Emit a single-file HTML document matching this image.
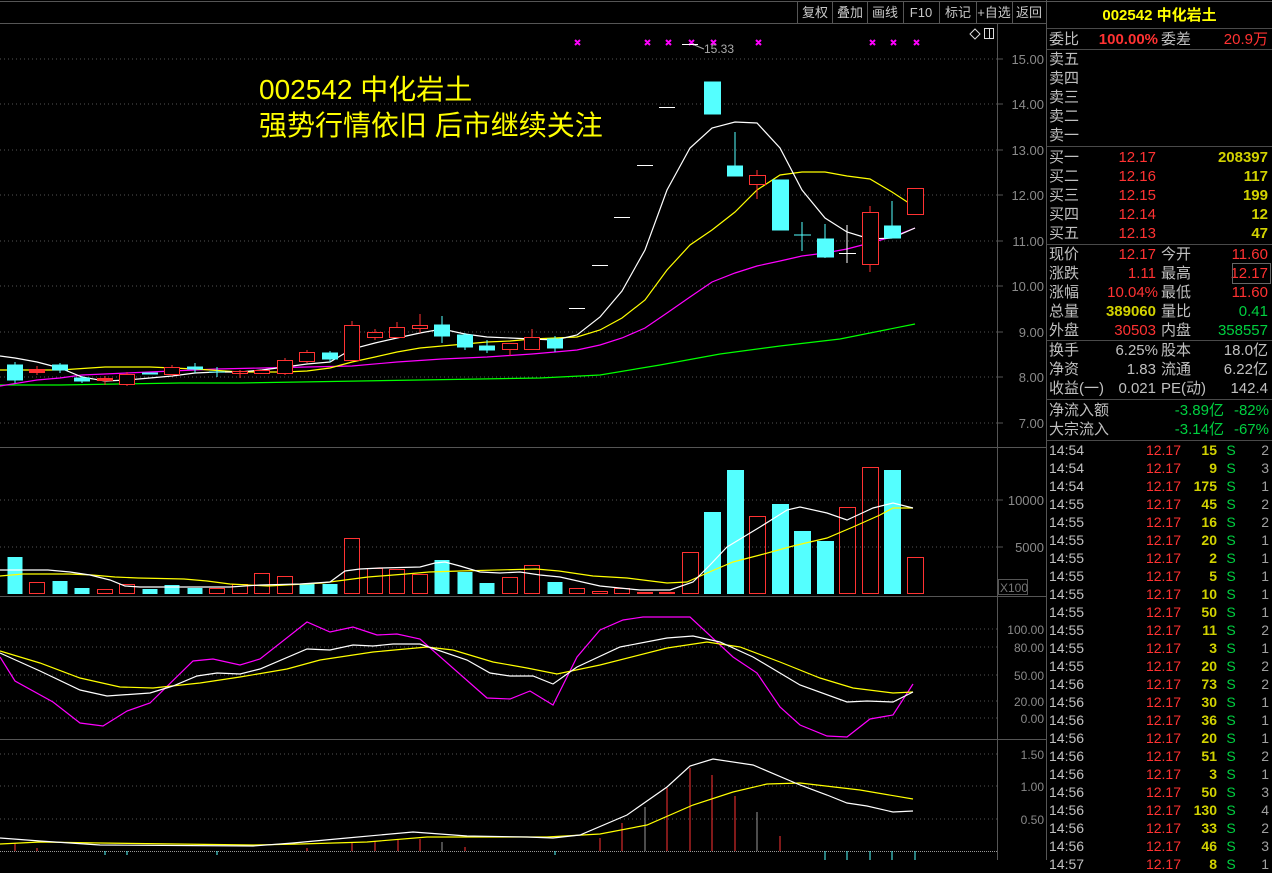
<!DOCTYPE html>
<html><head><meta charset="utf-8"><style>
body{margin:0;background:#000;width:1272px;height:860px;overflow:hidden;position:relative;font-family:"Liberation Sans","Noto Sans CJK SC",sans-serif;}
.t{position:absolute;font-size:15px;line-height:19px;white-space:nowrap;color:#c0c0c0}
.r{color:#ff3232}.y{color:#d2d200}.g{color:#00d040}.yy{color:#ffff00}
.ra{text-align:right}
.sep{position:absolute;left:1047px;width:225px;height:1px;background:#4a4a4a}
</style></head><body>
<svg width="1272" height="860" style="position:absolute;left:0;top:0" font-family="Liberation Sans, Noto Sans CJK SC, sans-serif">
<line x1="0" y1="1.5" x2="1272" y2="1.5" stroke="#555"/>
<line x1="0" y1="23.5" x2="1046" y2="23.5" stroke="#555"/>
<line x1="997.5" y1="24" x2="997.5" y2="860" stroke="#555"/>
<line x1="1046.5" y1="0" x2="1046.5" y2="860" stroke="#555"/>
<line x1="0" y1="447.5" x2="1046" y2="447.5" stroke="#555"/>
<line x1="0" y1="596.5" x2="1046" y2="596.5" stroke="#555"/>
<line x1="0" y1="739.5" x2="1046" y2="739.5" stroke="#555"/>
<g stroke="#555"><line x1="797.5" y1="2" x2="797.5" y2="23"/><line x1="832.5" y1="2" x2="832.5" y2="23"/><line x1="867.5" y1="2" x2="867.5" y2="23"/><line x1="903.5" y1="2" x2="903.5" y2="23"/><line x1="939.5" y1="2" x2="939.5" y2="23"/><line x1="976.5" y1="2" x2="976.5" y2="23"/><line x1="1012.5" y1="2" x2="1012.5" y2="23"/></g>
<g fill="#c8c8c8" font-size="13" text-anchor="middle"><text x="815" y="17">复权</text><text x="850" y="17">叠加</text><text x="885" y="17">画线</text><text x="921" y="17">F10</text><text x="958" y="17">标记</text><text x="994" y="17">+自选</text><text x="1029" y="17">返回</text></g>
<g stroke="#555" stroke-dasharray="1,3">
<line x1="0" y1="59" x2="997" y2="59"/><line x1="0" y1="104" x2="997" y2="104"/><line x1="0" y1="150" x2="997" y2="150"/><line x1="0" y1="195" x2="997" y2="195"/><line x1="0" y1="241" x2="997" y2="241"/><line x1="0" y1="286" x2="997" y2="286"/><line x1="0" y1="332" x2="997" y2="332"/><line x1="0" y1="377" x2="997" y2="377"/><line x1="0" y1="423" x2="997" y2="423"/>
<line x1="0" y1="500" x2="997" y2="500"/><line x1="0" y1="547" x2="997" y2="547"/>
<line x1="0" y1="629" x2="997" y2="629"/><line x1="0" y1="647" x2="997" y2="647"/><line x1="0" y1="675" x2="997" y2="675"/><line x1="0" y1="701" x2="997" y2="701"/><line x1="0" y1="718" x2="997" y2="718"/>
<line x1="0" y1="754" x2="997" y2="754"/><line x1="0" y1="786" x2="997" y2="786"/><line x1="0" y1="819" x2="997" y2="819"/>
</g>
<line x1="0" y1="851.5" x2="997" y2="851.5" stroke="#999" stroke-dasharray="1,1"/>
<g fill="#8a8a8a" font-size="13" text-anchor="end">
<text x="1044" y="64">15.00</text><text x="1044" y="109">14.00</text><text x="1044" y="155">13.00</text><text x="1044" y="200">12.00</text><text x="1044" y="246">11.00</text><text x="1044" y="291">10.00</text><text x="1044" y="337">9.00</text><text x="1044" y="382">8.00</text><text x="1044" y="428">7.00</text>
<text x="1044" y="505">10000</text><text x="1044" y="552">5000</text>
<text x="1044" y="634" font-size="12">100.00</text><text x="1044" y="652" font-size="12">80.00</text><text x="1044" y="680" font-size="12">50.00</text><text x="1044" y="706" font-size="12">20.00</text><text x="1044" y="723" font-size="12">0.00</text>
<text x="1044" y="759" font-size="12">1.50</text><text x="1044" y="791" font-size="12">1.00</text><text x="1044" y="824" font-size="12">0.50</text>
</g>
<g stroke="#555"><line x1="997" y1="59" x2="1003" y2="59"/><line x1="997" y1="104" x2="1003" y2="104"/><line x1="997" y1="150" x2="1003" y2="150"/><line x1="997" y1="195" x2="1003" y2="195"/><line x1="997" y1="241" x2="1003" y2="241"/><line x1="997" y1="286" x2="1003" y2="286"/><line x1="997" y1="332" x2="1003" y2="332"/><line x1="997" y1="377" x2="1003" y2="377"/><line x1="997" y1="423" x2="1003" y2="423"/><line x1="997" y1="500" x2="1003" y2="500"/><line x1="997" y1="547" x2="1003" y2="547"/></g>
<rect x="998.5" y="579.5" width="29" height="15" fill="none" stroke="#555"/><text x="1000" y="592" fill="#777" font-size="12">X100</text>
<path d="M975 29 L980 34 L975 39 L970 34 Z" fill="none" stroke="#ddd"/>
<rect x="984.5" y="28.5" width="9" height="10" fill="none" stroke="#ddd"/><line x1="989.5" y1="28" x2="989.5" y2="39" stroke="#ddd"/>
<text x="259" y="99" fill="#ffff00" font-size="28">002542 中化岩土</text>
<text x="259" y="135" fill="#ffff00" font-size="28">强势行情依旧 后市继续关注</text>
<g stroke="#ff00ff" stroke-width="2">
<path d="M575 40l5 5M580 40l-5 5M645 40l5 5M650 40l-5 5M666 40l5 5M671 40l-5 5M689 40l5 5M694 40l-5 5M711 40l5 5M716 40l-5 5M756 40l5 5M761 40l-5 5M870 40l5 5M875 40l-5 5M891 40l5 5M896 40l-5 5M914 40l5 5M919 40l-5 5"/>
</g>
<path d="M692 44 L704 49" stroke="#aaa"/><text x="704" y="53" fill="#aaa" font-size="12">15.33</text>
<g fill="none" stroke-width="1.2">
<polyline stroke="#00ff00" points="0,385 60,385 120,384 180,383 240,383 300,382 360,381 420,380 480,379 540,378 600,375 660,365 720,354 780,346 840,339 915,324"/>
<polyline stroke="#ff00ff" points="0,386 37,380 60,378 82,375 127,373 172,371 217,369 262,368 307,367 352,366 397,362 442,359 487,357 532,354 555,352 577,350 600,345 622,338 645,328 667,313 690,297 712,282 735,273 757,266 780,261 802,256 825,253 847,249 870,243 892,237 915,228"/>
<polyline stroke="#ffff00" points="0,370 60,370 105,367 150,367 195,369 240,372 285,372 307,371 330,368 352,362 375,357 397,352 420,348 442,346 465,344 487,342 510,341 532,339 555,338 577,337 600,330 622,318 645,300 667,270 690,245 712,230 735,212 757,190 780,175 802,172 825,172 847,176 870,179 892,192 915,207"/>
<polyline stroke="#ffffff" points="0,356 15,358 37,362 60,368 82,377 105,381 127,380 150,378 172,376 195,373 217,372 240,372 262,370 285,367 307,364 330,362 352,349 375,343 397,338 420,333 442,329 465,334 487,337 510,338 532,339 555,340 577,335 600,317 622,291 645,250 667,190 690,148 712,128 735,122 757,123 780,148 802,190 825,218 847,232 870,239 892,238 915,228"/>
</g>
<g stroke="#54ffff" fill="#54ffff">
<line x1="15" y1="362" x2="15" y2="383"/><rect x="7.5" y="365" width="15" height="15"/>
<line x1="60" y1="363" x2="60" y2="373"/><rect x="52.5" y="365" width="15" height="5"/>
<line x1="82" y1="376" x2="82" y2="383"/><rect x="74.5" y="378" width="15" height="3"/>
<rect x="142.5" y="373" width="15" height="1"/>
<line x1="195" y1="363" x2="195" y2="373"/><rect x="187.5" y="367" width="15" height="2"/>
<line x1="217" y1="367" x2="217" y2="377"/><line x1="209" y1="372" x2="225" y2="372"/>
<line x1="330" y1="351" x2="330" y2="362"/><rect x="322.5" y="353" width="15" height="6"/>
<line x1="442" y1="316" x2="442" y2="343"/><rect x="434.5" y="325" width="15" height="11"/>
<line x1="465" y1="333" x2="465" y2="350"/><rect x="457.5" y="335" width="15" height="12"/>
<line x1="487" y1="340" x2="487" y2="353"/><rect x="479.5" y="346" width="15" height="4"/>
<line x1="555" y1="336" x2="555" y2="352"/><rect x="547.5" y="339" width="15" height="9"/>
<rect x="704.5" y="82" width="16" height="32"/>
<line x1="735" y1="132" x2="735" y2="176"/><rect x="727.5" y="166" width="15" height="10"/>
<rect x="772.5" y="180" width="16" height="50"/>
<line x1="802" y1="222" x2="802" y2="251"/><line x1="794" y1="235" x2="811" y2="235"/>
<line x1="825" y1="224" x2="825" y2="258"/><rect x="817.5" y="239" width="16" height="18"/>
<line x1="892" y1="201" x2="892" y2="238"/><rect x="884.5" y="226" width="16" height="12"/>
</g>
<g stroke="#ff3232" fill="#000">
<rect x="29.5" y="369.5" width="15" height="3" fill="#ff3232"/><line x1="37" y1="366" x2="37" y2="375"/>
<line x1="105" y1="376" x2="105" y2="385"/><rect x="97.5" y="378.5" width="15" height="2" fill="#ff3232"/>
<line x1="127" y1="372" x2="127" y2="386"/><rect x="119.5" y="374.5" width="15" height="10"/>
<line x1="172" y1="365" x2="172" y2="376"/><rect x="164.5" y="367.5" width="15" height="7"/>
<rect x="232.5" y="371.5" width="15" height="2"/><line x1="240" y1="370" x2="240" y2="378"/>
<rect x="254.5" y="370.5" width="15" height="3"/>
<line x1="285" y1="358" x2="285" y2="375"/><rect x="277.5" y="360.5" width="15" height="13"/>
<line x1="307" y1="350" x2="307" y2="363"/><rect x="299.5" y="352.5" width="15" height="9"/>
<line x1="352" y1="321" x2="352" y2="325"/><rect x="344.5" y="325.5" width="15" height="35"/>
<line x1="375" y1="329" x2="375" y2="340"/><rect x="367.5" y="332.5" width="15" height="5"/>
<line x1="397" y1="322" x2="397" y2="327"/><rect x="389.5" y="327.5" width="15" height="10"/>
<line x1="420" y1="314" x2="420" y2="333"/><rect x="412.5" y="325.5" width="15" height="3"/>
<line x1="510" y1="349" x2="510" y2="356"/><rect x="502.5" y="343.5" width="15" height="6"/>
<line x1="532" y1="329" x2="532" y2="337"/><rect x="524.5" y="337.5" width="15" height="12"/>
<line x1="757" y1="170" x2="757" y2="199"/><rect x="749.5" y="175.5" width="16" height="9"/>
<line x1="870" y1="206" x2="870" y2="272"/><rect x="862.5" y="212.5" width="16" height="52"/>
<rect x="907.5" y="188.5" width="16" height="26"/>
</g>
<g stroke="#fff">
<line x1="569" y1="308.5" x2="585" y2="308.5"/><line x1="592" y1="265.5" x2="608" y2="265.5"/><line x1="614" y1="217.5" x2="630" y2="217.5"/><line x1="637" y1="165.5" x2="653" y2="165.5"/><line x1="659" y1="107.5" x2="675" y2="107.5"/><line x1="682" y1="44.5" x2="698" y2="44.5"/>
<line x1="847" y1="225" x2="847" y2="263"/><line x1="839" y1="253.5" x2="856" y2="253.5"/>
</g>
<g fill="#54ffff">
<rect x="7.5" y="557" width="15" height="37"/><rect x="52.5" y="581" width="15" height="13"/><rect x="74.5" y="588" width="15" height="6"/><rect x="142.5" y="589" width="15" height="5"/><rect x="164.5" y="585" width="15" height="9"/><rect x="187.5" y="588" width="15" height="6"/><rect x="299.5" y="584" width="15" height="10"/><rect x="322.5" y="584" width="15" height="10"/><rect x="434.5" y="560" width="15" height="34"/><rect x="457.5" y="572" width="15" height="22"/><rect x="479.5" y="583" width="15" height="11"/><rect x="547.5" y="582" width="15" height="12"/>
<rect x="704" y="512" width="17" height="82"/><rect x="727" y="470" width="17" height="124"/><rect x="772" y="504" width="17" height="90"/><rect x="794" y="531" width="17" height="63"/><rect x="817" y="541" width="17" height="53"/><rect x="884" y="470" width="17" height="124"/>
</g>
<g stroke="#ff3232" fill="none">
<rect x="29.5" y="582.5" width="15" height="11"/><rect x="97.5" y="589.5" width="15" height="4"/><rect x="119.5" y="584.5" width="15" height="9"/><rect x="209.5" y="588.5" width="15" height="5"/><rect x="232.5" y="584.5" width="15" height="9"/><rect x="254.5" y="573.5" width="15" height="20"/><rect x="277.5" y="576.5" width="15" height="17"/><rect x="344.5" y="538.5" width="15" height="55"/><rect x="367.5" y="568.5" width="15" height="25"/><rect x="389.5" y="569.5" width="15" height="24"/><rect x="412.5" y="574.5" width="15" height="19"/><rect x="502.5" y="577.5" width="15" height="16"/><rect x="524.5" y="565.5" width="15" height="28"/><rect x="569.5" y="588.5" width="15" height="5"/><rect x="592.5" y="591.5" width="15" height="2"/><rect x="614.5" y="588.5" width="15" height="5"/>
<rect x="682.5" y="552.5" width="16" height="41"/><rect x="749.5" y="516.5" width="16" height="77"/><rect x="839.5" y="507.5" width="16" height="86"/><rect x="862.5" y="467.5" width="16" height="126"/><rect x="907.5" y="557.5" width="16" height="36"/>
</g>
<rect x="637" y="592" width="16" height="2" fill="#ff3232"/><rect x="659" y="592" width="16" height="2" fill="#ff3232"/>
<g fill="none" stroke-width="1.2">
<polyline stroke="#ffff00" points="0,576 23,574 69,574 92,575 115,577 138,578 184,579 207,581 230,584 268,586 322,583 345,580 368,577 406,574 429,572 460,571 536,569 559,571 593,576 627,578 667,583 687,582 707,573 733,562 760,555 793,546 827,538 853,527 880,515 893,508 913,508"/>
<polyline stroke="#ffffff" points="0,570 48,570 70,572 90,575 110,580 125,586 140,587 230,587 260,585 300,584 330,582 345,571 360,569 380,568 420,567 435,563 445,562 460,566 480,572 500,573 520,572 540,575 560,577 600,586 640,590 670,590 693,582 710,565 727,547 760,527 787,510 800,507 827,513 847,520 873,508 893,503 913,508"/>
</g>
<g fill="none" stroke-width="1.2">
<polyline stroke="#ff00ff" points="0,657 15,681 53,702 80,723 103,726 127,711 150,703 193,661 213,659 240,665 260,659 307,622 330,632 353,627 377,635 397,634 420,639 487,698 510,699 530,691 553,705 577,657 600,630 623,620 643,617 690,617 733,657 757,673 780,707 800,725 827,736 847,737 870,719 893,715 913,684"/>
<polyline stroke="#ffff00" points="0,651 40,663 80,678 120,687 153,688 200,683 240,677 287,669 320,660 373,652 427,647 453,650 493,662 527,668 557,674 600,665 667,648 707,642 740,647 780,662 820,678 853,688 893,693 913,692"/>
<polyline stroke="#ffffff" points="0,653 40,671 80,690 107,696 150,693 173,686 197,676 217,673 240,674 260,669 307,649 330,650 353,645 373,646 393,644 420,644 467,660 490,673 510,676 533,676 553,684 577,667 620,647 667,638 693,636 720,642 753,657 800,685 847,702 867,701 893,702 913,692"/>
</g>
<g stroke="#ff3232">
<line x1="15" y1="843" x2="15" y2="851"/><line x1="37" y1="848" x2="37" y2="851"/><line x1="307" y1="848" x2="307" y2="851"/><line x1="352" y1="843" x2="352" y2="851"/><line x1="375" y1="841" x2="375" y2="851"/><line x1="398" y1="840" x2="398" y2="851"/><line x1="420" y1="839" x2="420" y2="851"/><line x1="465" y1="847" x2="465" y2="851"/><line x1="600" y1="838" x2="600" y2="851"/><line x1="622" y1="823" x2="622" y2="851"/><line x1="667" y1="788" x2="667" y2="851"/><line x1="690" y1="768" x2="690" y2="851"/><line x1="712" y1="775" x2="712" y2="851"/><line x1="735" y1="796" x2="735" y2="851"/><line x1="780" y1="836" x2="780" y2="851"/>
</g>
<g stroke="#999"><line x1="442" y1="842" x2="442" y2="851"/><line x1="645" y1="807" x2="645" y2="851"/><line x1="757" y1="812" x2="757" y2="851"/></g>
<g stroke="#54ffff"><line x1="105" y1="851" x2="105" y2="855"/><line x1="127" y1="851" x2="127" y2="855"/><line x1="217" y1="851" x2="217" y2="855"/><line x1="555" y1="851" x2="555" y2="855"/><line x1="825" y1="851" x2="825" y2="860"/><line x1="847" y1="851" x2="847" y2="860"/><line x1="870" y1="851" x2="870" y2="860"/><line x1="892" y1="851" x2="892" y2="860"/><line x1="915" y1="851" x2="915" y2="860"/></g>
<g fill="none" stroke-width="1.2">
<polyline stroke="#ffff00" points="0,844 40,842 100,843 253,845 300,844 367,842 427,837 547,837 600,834 647,825 693,805 733,792 767,784 800,783 860,790 913,799"/>
<polyline stroke="#ffffff" points="0,838 40,841 100,845 253,846 293,843 347,838 413,832 467,836 527,837 553,838 580,835 627,815 667,787 690,766 713,759 753,765 800,785 827,795 847,803 867,806 893,812 913,811"/>
</g>
</svg>
<div class="t yy" style="left:1047px;width:225px;top:6px;text-align:center;font-weight:bold;font-size:15px">002542 中化岩土</div>
<div class="sep" style="top:28px"></div>
<div class="t" style="left:1049px;top:30px">委比</div><div class="t r ra" style="left:1090px;width:68px;top:30px;font-weight:bold">100.00%</div><div class="t" style="left:1161px;top:30px">委差</div><div class="t r ra" style="left:1200px;width:68px;top:30px">20.9万</div>
<div class="sep" style="top:49px"></div>
<div class="t" style="left:1049px;top:50px">卖五</div><div class="t" style="left:1049px;top:69px">卖四</div><div class="t" style="left:1049px;top:88px">卖三</div><div class="t" style="left:1049px;top:107px">卖二</div><div class="t" style="left:1049px;top:126px">卖一</div>
<div class="sep" style="top:146px"></div>
<div class="t" style="left:1049px;top:148px">买一</div><div class="t r ra" style="left:1090px;width:66px;top:148px">12.17</div><div class="t y ra" style="left:1190px;width:78px;top:148px;font-weight:bold">208397</div>
<div class="t" style="left:1049px;top:167px">买二</div><div class="t r ra" style="left:1090px;width:66px;top:167px">12.16</div><div class="t y ra" style="left:1190px;width:78px;top:167px;font-weight:bold">117</div>
<div class="t" style="left:1049px;top:186px">买三</div><div class="t r ra" style="left:1090px;width:66px;top:186px">12.15</div><div class="t y ra" style="left:1190px;width:78px;top:186px;font-weight:bold">199</div>
<div class="t" style="left:1049px;top:205px">买四</div><div class="t r ra" style="left:1090px;width:66px;top:205px">12.14</div><div class="t y ra" style="left:1190px;width:78px;top:205px;font-weight:bold">12</div>
<div class="t" style="left:1049px;top:224px">买五</div><div class="t r ra" style="left:1090px;width:66px;top:224px">12.13</div><div class="t y ra" style="left:1190px;width:78px;top:224px;font-weight:bold">47</div>
<div class="sep" style="top:244px"></div>
<div class="t" style="left:1049px;top:245px">现价</div><div class="t r ra" style="left:1090px;width:66px;top:245px">12.17</div><div class="t" style="left:1161px;top:245px">今开</div><div class="t r ra" style="left:1200px;width:68px;top:245px">11.60</div>
<div class="t" style="left:1049px;top:264px">涨跌</div><div class="t r ra" style="left:1090px;width:66px;top:264px">1.11</div><div class="t" style="left:1161px;top:264px">最高</div><div class="t r ra" style="left:1200px;width:68px;top:264px">12.17</div>
<div style="position:absolute;left:1232px;top:263px;width:37px;height:19px;border:1px solid #666"></div>
<div class="t" style="left:1049px;top:283px">涨幅</div><div class="t r ra" style="left:1090px;width:68px;top:283px">10.04%</div><div class="t" style="left:1161px;top:283px">最低</div><div class="t r ra" style="left:1200px;width:68px;top:283px">11.60</div>
<div class="t" style="left:1049px;top:302px">总量</div><div class="t y ra" style="left:1090px;width:66px;top:302px;font-weight:bold">389060</div><div class="t" style="left:1161px;top:302px">量比</div><div class="t g ra" style="left:1200px;width:68px;top:302px">0.41</div>
<div class="t" style="left:1049px;top:321px">外盘</div><div class="t r ra" style="left:1090px;width:66px;top:321px">30503</div><div class="t" style="left:1161px;top:321px">内盘</div><div class="t g ra" style="left:1200px;width:68px;top:321px">358557</div>
<div class="sep" style="top:340px"></div>
<div class="t" style="left:1049px;top:341px">换手</div><div class="t ra" style="left:1090px;width:68px;top:341px">6.25%</div><div class="t" style="left:1161px;top:341px">股本</div><div class="t ra" style="left:1200px;width:68px;top:341px">18.0亿</div>
<div class="t" style="left:1049px;top:360px">净资</div><div class="t ra" style="left:1090px;width:66px;top:360px">1.83</div><div class="t" style="left:1161px;top:360px">流通</div><div class="t ra" style="left:1200px;width:68px;top:360px">6.22亿</div>
<div class="t" style="left:1049px;top:379px">收益(一)</div><div class="t ra" style="left:1090px;width:66px;top:379px">0.021</div><div class="t" style="left:1161px;top:379px">PE(动)</div><div class="t ra" style="left:1200px;width:68px;top:379px">142.4</div>
<div class="sep" style="top:399px"></div>
<div class="t" style="left:1049px;top:401px">净流入额</div><div class="t g ra" style="left:1150px;width:74px;top:401px">-3.89亿</div><div class="t g ra" style="left:1226px;width:43px;top:401px">-82%</div>
<div class="t" style="left:1049px;top:420px">大宗流入</div><div class="t g ra" style="left:1150px;width:74px;top:420px">-3.14亿</div><div class="t g ra" style="left:1226px;width:43px;top:420px">-67%</div>
<div class="sep" style="top:440px"></div>
<div style="position:absolute;left:1049px;top:441px;width:222px;font-size:14px;line-height:18px;font-family:'Liberation Sans',sans-serif">
<style>.row{display:flex;height:18px}.row span{display:block}.a{width:56px;color:#c0c0c0}.b{width:76px;text-align:right;color:#ff3232}.c{width:36px;text-align:right;color:#d2d200;font-weight:bold}.d{width:28px;text-align:center;color:#00d040}.e{width:24px;text-align:right;color:#a0a0a0}</style>
<div class="row"><span class="a">14:54</span><span class="b">12.17</span><span class="c">15</span><span class="d">S</span><span class="e">2</span></div>
<div class="row"><span class="a">14:54</span><span class="b">12.17</span><span class="c">9</span><span class="d">S</span><span class="e">3</span></div>
<div class="row"><span class="a">14:54</span><span class="b">12.17</span><span class="c">175</span><span class="d">S</span><span class="e">1</span></div>
<div class="row"><span class="a">14:55</span><span class="b">12.17</span><span class="c">45</span><span class="d">S</span><span class="e">2</span></div>
<div class="row"><span class="a">14:55</span><span class="b">12.17</span><span class="c">16</span><span class="d">S</span><span class="e">2</span></div>
<div class="row"><span class="a">14:55</span><span class="b">12.17</span><span class="c">20</span><span class="d">S</span><span class="e">1</span></div>
<div class="row"><span class="a">14:55</span><span class="b">12.17</span><span class="c">2</span><span class="d">S</span><span class="e">1</span></div>
<div class="row"><span class="a">14:55</span><span class="b">12.17</span><span class="c">5</span><span class="d">S</span><span class="e">1</span></div>
<div class="row"><span class="a">14:55</span><span class="b">12.17</span><span class="c">10</span><span class="d">S</span><span class="e">1</span></div>
<div class="row"><span class="a">14:55</span><span class="b">12.17</span><span class="c">50</span><span class="d">S</span><span class="e">1</span></div>
<div class="row"><span class="a">14:55</span><span class="b">12.17</span><span class="c">11</span><span class="d">S</span><span class="e">2</span></div>
<div class="row"><span class="a">14:55</span><span class="b">12.17</span><span class="c">3</span><span class="d">S</span><span class="e">1</span></div>
<div class="row"><span class="a">14:55</span><span class="b">12.17</span><span class="c">20</span><span class="d">S</span><span class="e">2</span></div>
<div class="row"><span class="a">14:56</span><span class="b">12.17</span><span class="c">73</span><span class="d">S</span><span class="e">2</span></div>
<div class="row"><span class="a">14:56</span><span class="b">12.17</span><span class="c">30</span><span class="d">S</span><span class="e">1</span></div>
<div class="row"><span class="a">14:56</span><span class="b">12.17</span><span class="c">36</span><span class="d">S</span><span class="e">1</span></div>
<div class="row"><span class="a">14:56</span><span class="b">12.17</span><span class="c">20</span><span class="d">S</span><span class="e">1</span></div>
<div class="row"><span class="a">14:56</span><span class="b">12.17</span><span class="c">51</span><span class="d">S</span><span class="e">2</span></div>
<div class="row"><span class="a">14:56</span><span class="b">12.17</span><span class="c">3</span><span class="d">S</span><span class="e">1</span></div>
<div class="row"><span class="a">14:56</span><span class="b">12.17</span><span class="c">50</span><span class="d">S</span><span class="e">3</span></div>
<div class="row"><span class="a">14:56</span><span class="b">12.17</span><span class="c">130</span><span class="d">S</span><span class="e">4</span></div>
<div class="row"><span class="a">14:56</span><span class="b">12.17</span><span class="c">33</span><span class="d">S</span><span class="e">2</span></div>
<div class="row"><span class="a">14:56</span><span class="b">12.17</span><span class="c">46</span><span class="d">S</span><span class="e">3</span></div>
<div class="row"><span class="a">14:57</span><span class="b">12.17</span><span class="c">8</span><span class="d">S</span><span class="e">1</span></div>
</div>
</body></html>
